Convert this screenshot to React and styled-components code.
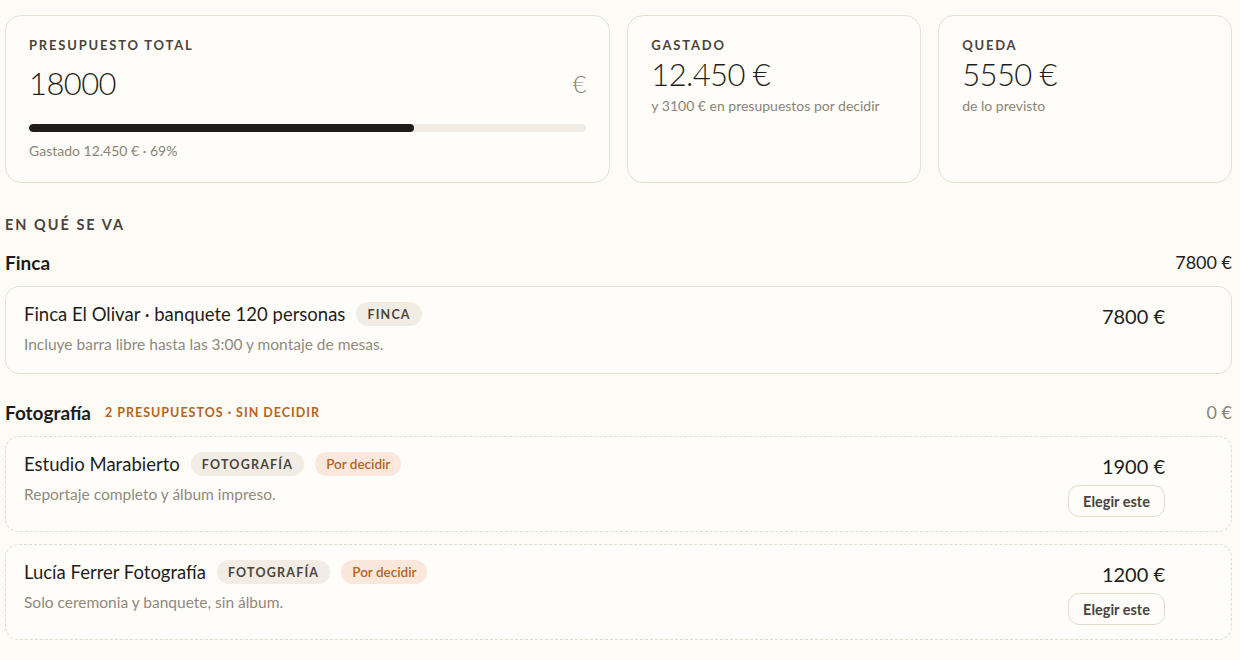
import React from 'react';
import styled, { createGlobalStyle } from 'styled-components';

const GlobalStyle = createGlobalStyle`
  html, body {
    margin: 0;
    background: #fdfbf6;
    font-family: Lato, "Noto Sans", sans-serif;
    color: #1f1d1a;
  }
  * { box-sizing: border-box; }
`;

const Page = styled.div`
  padding: 15px 8px 0 5px;
`;

const Summary = styled.div`
  display: grid;
  grid-template-columns: 2.06fr 1fr 1fr;
  gap: 17px;
`;

const Card = styled.div`
  height: 168px;
  border: 1px solid #e6e0d4;
  border-radius: 16px;
  padding: 21px 23px;
  background: #fffdf9;
`;

const Label = styled.div`
  font-size: 13px;
  font-weight: 700;
  letter-spacing: 1.8px;
  text-transform: uppercase;
  color: #4a443c;
`;

const InputRow = styled.div`
  display: flex;
  align-items: center;
  justify-content: space-between;
  margin-top: 10px;
  height: 40px;
`;

const BigNumber = styled.div`
  font-size: 31px;
  font-weight: 300;
  letter-spacing: -0.6px;
  color: #1f1d1a;
`;

const Suffix = styled.span`
  font-size: 24px;
  font-weight: 300;
  color: #7f796e;
`;

const Track = styled.div`
  margin-top: 21px;
  height: 8px;
  border-radius: 4px;
  background: #f2ede4;
  overflow: hidden;
`;

const Fill = styled.div`
  height: 100%;
  border-radius: 4px;
  background: #1f1d1a;
`;

const Note = styled.div`
  margin-top: ${p => p.$top || 12}px;
  font-size: 14px;
  color: #8a8478;
`;

const StatValue = styled(BigNumber)`
  margin-top: 2px;
  line-height: 38px;
`;

const SectionTitle = styled.div`
  margin-top: 33px;
  font-size: 14.5px;
  font-weight: 700;
  letter-spacing: 2px;
  color: #4a443c;
`;

const Category = styled.div`
  margin-top: ${p => p.$top}px;
`;

const CategoryHead = styled.div`
  display: flex;
  align-items: center;
  height: 24px;
  margin-bottom: 12px;
`;

const CategoryName = styled.span`
  font-size: 19px;
  font-weight: 700;
`;

const CategoryMeta = styled.span`
  margin-left: 14px;
  font-size: 12.5px;
  font-weight: 700;
  letter-spacing: 1px;
  color: #b5651d;
`;

const CategoryTotal = styled.span`
  margin-left: auto;
  font-size: 18px;
  color: ${p => (p.$muted ? '#8a8478' : '#1f1d1a')};
`;

const List = styled.div`
  display: flex;
  flex-direction: column;
  gap: 12px;
`;

const Item = styled.div`
  display: flex;
  justify-content: space-between;
  border: 1px ${p => (p.$dashed ? 'dashed #e2dccf' : 'solid #e6e0d4')};
  border-radius: 14px;
  padding: ${p => (p.$dashed ? '15px 66px 14px 18px' : '15px 66px 19px 18px')};
  background: #fffdf9;
`;

const ItemMain = styled.div`
  display: flex;
  flex-direction: column;
  gap: 8px;
`;

const TitleRow = styled.div`
  display: flex;
  align-items: center;
  gap: 11px;
`;

const ItemTitle = styled.span`
  font-size: 18.5px;
  color: #1f1d1a;
`;

const Tag = styled.span`
  height: 24px;
  display: inline-flex;
  align-items: center;
  padding: 0 11px;
  border-radius: 12px;
  font-size: 12.5px;
  font-weight: 700;
  letter-spacing: 1.2px;
  background: ${p => (p.$warn ? '#fbe8dc' : '#f2ede4')};
  color: ${p => (p.$warn ? '#b5651d' : '#4a443c')};
  ${p => p.$warn && 'letter-spacing: 0; font-size: 13.5px; font-weight: 600;'}
`;

const Desc = styled.span`
  font-size: 15.5px;
  line-height: 20px;
  color: #8f897e;
`;

const ItemSide = styled.div`
  display: flex;
  flex-direction: column;
  align-items: flex-end;
  gap: 5px;
`;

const Price = styled.span`
  font-size: 20px;
  line-height: 28px;
  color: #1f1d1a;
`;

const ChooseButton = styled.button`
  height: 32px;
  width: 97px;
  border: 1px solid #e2dccf;
  border-radius: 11px;
  background: #fffdf9;
  font-family: inherit;
  font-size: 14.5px;
  font-weight: 700;
  color: #4a443c;
  cursor: pointer;
`;

const quotes = [
  { name: 'Estudio Marabierto', desc: 'Reportaje completo y álbum impreso.', price: '1900 €' },
  { name: 'Lucía Ferrer Fotografía', desc: 'Solo ceremonia y banquete, sin álbum.', price: '1200 €' },
];

export default function App() {
  const pct = 69;
  return (
    <Page>
      <GlobalStyle />
      <Summary>
        <Card>
          <Label>Presupuesto total</Label>
          <InputRow>
            <BigNumber>18000</BigNumber>
            <Suffix>€</Suffix>
          </InputRow>
          <Track>
            <Fill style={{ width: `${pct}%` }} />
          </Track>
          <Note $top={10}>Gastado 12.450 € · {pct}%</Note>
        </Card>
        <Card>
          <Label>Gastado</Label>
          <StatValue>12.450 €</StatValue>
          <Note $top={4}>y 3100 € en presupuestos por decidir</Note>
        </Card>
        <Card>
          <Label>Queda</Label>
          <StatValue>5550 €</StatValue>
          <Note $top={4}>de lo previsto</Note>
        </Card>
      </Summary>

      <SectionTitle>EN QUÉ SE VA</SectionTitle>

      <Category $top={17}>
        <CategoryHead>
          <CategoryName>Finca</CategoryName>
          <CategoryTotal>7800 €</CategoryTotal>
        </CategoryHead>
        <List>
          <Item>
            <ItemMain>
              <TitleRow>
                <ItemTitle>Finca El Olivar · banquete 120 personas</ItemTitle>
                <Tag>FINCA</Tag>
              </TitleRow>
              <Desc>Incluye barra libre hasta las 3:00 y montaje de mesas.</Desc>
            </ItemMain>
            <ItemSide>
              <Price>7800 €</Price>
            </ItemSide>
          </Item>
        </List>
      </Category>

      <Category $top={26}>
        <CategoryHead>
          <CategoryName>Fotografía</CategoryName>
          <CategoryMeta>2 PRESUPUESTOS · SIN DECIDIR</CategoryMeta>
          <CategoryTotal $muted>0 €</CategoryTotal>
        </CategoryHead>
        <List>
          {quotes.map(q => (
            <Item $dashed key={q.name}>
              <ItemMain>
                <TitleRow>
                  <ItemTitle>{q.name}</ItemTitle>
                  <Tag>FOTOGRAFÍA</Tag>
                  <Tag $warn>Por decidir</Tag>
                </TitleRow>
                <Desc>{q.desc}</Desc>
              </ItemMain>
              <ItemSide>
                <Price>{q.price}</Price>
                <ChooseButton>Elegir este</ChooseButton>
              </ItemSide>
            </Item>
          ))}
        </List>
      </Category>
    </Page>
  );
}
